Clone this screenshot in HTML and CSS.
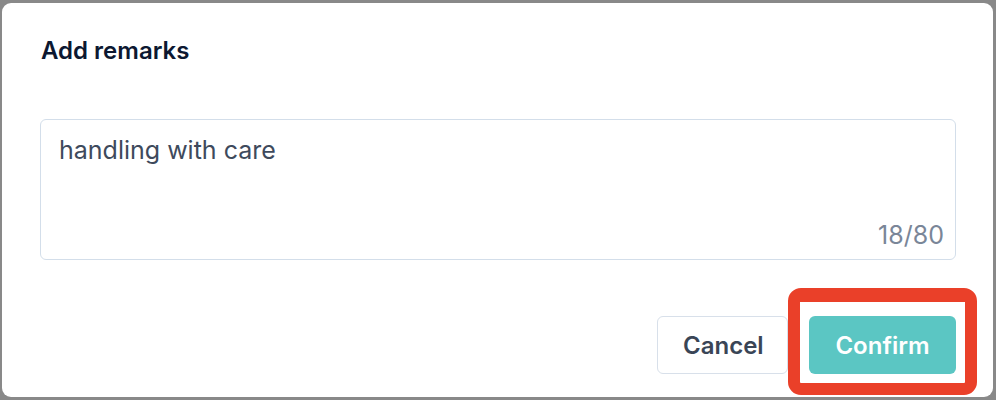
FILE: index.html
```html
<!DOCTYPE html>
<html lang="en">
<head>
  <meta charset="UTF-8">
  <meta name="viewport" content="width=device-width, initial-scale=1.0">
  <title>Add remarks</title>
  <link rel="stylesheet" href="styles.css">
</head>
<body>

  <div class="dialog">
    <h2 class="dialog-title">Add remarks</h2>

    <div class="remark-box">
      <textarea class="remark-input" maxlength="80">handling with care</textarea>
      <span class="remark-count">18/80</span>
    </div>

    <div class="dialog-footer">
      <button class="btn btn-cancel">Cancel</button>
      <div class="confirm-wrap">
        <button class="btn btn-confirm">Confirm</button>
        <span class="highlight"></span>
      </div>
    </div>
  </div>

</body>
</html>
```

FILE: styles.css
```css
body {
  margin: 0;
  background-color: #898989;
  font-family: 'Inter', 'Noto Sans', sans-serif;
  height: 400px;
  overflow: hidden;
}
.dialog {
  box-sizing: border-box;
  width: 991px;
  height: 394px;
  margin: 3px 0 0 2px;
  padding: 0 37px 0 38px;
  background-color: #fff;
  border-radius: 9px;
  display: flex;
  flex-direction: column;
}
.dialog-title {
  margin: 33px 0 0 1px;
  font-size: 24px;
  font-weight: 600;
  line-height: 30px;
  color: #0c1831;
}
.remark-box {
  position: relative;
  margin-top: 53px;
  height: 141px;
  box-sizing: border-box;
  border: 1px solid #d3deea;
  border-radius: 6px;
}
.remark-input {
  box-sizing: border-box;
  width: 100%;
  height: 100%;
  border: none;
  outline: none;
  resize: none;
  background: transparent;
  padding: 14px 18px;
  font-family: inherit;
  font-size: 25px;
  line-height: 32px;
  color: #3e4a5c;
}
.remark-count {
  position: absolute;
  right: 11px;
  bottom: 8px;
  font-size: 25px;
  line-height: 32px;
  color: #7a8698;
}
.dialog-footer {
  display: flex;
  justify-content: flex-end;
  gap: 21px;
  margin-top: 56px;
}
.btn {
  height: 58px;
  box-sizing: border-box;
  border-radius: 6px;
  font-family: inherit;
  font-size: 24px;
  font-weight: 600;
  padding: 0 25px;
  cursor: pointer;
}
.btn-cancel {
  width: 131px;
  background-color: #fff;
  border: 1px solid #d8e0ea;
  color: #3a4556;
}
.btn-confirm {
  width: 147px;
  background-color: #5bc6c3;
  border: none;
  color: #fff;
}
.confirm-wrap {
  position: relative;
  display: flex;
}
.highlight {
  position: absolute;
  top: -28px;
  left: -21px;
  right: -21px;
  bottom: -21px;
  border: 12px solid #ea4029;
  border-top-width: 14px;
  border-radius: 13px;
  pointer-events: none;
}
```
